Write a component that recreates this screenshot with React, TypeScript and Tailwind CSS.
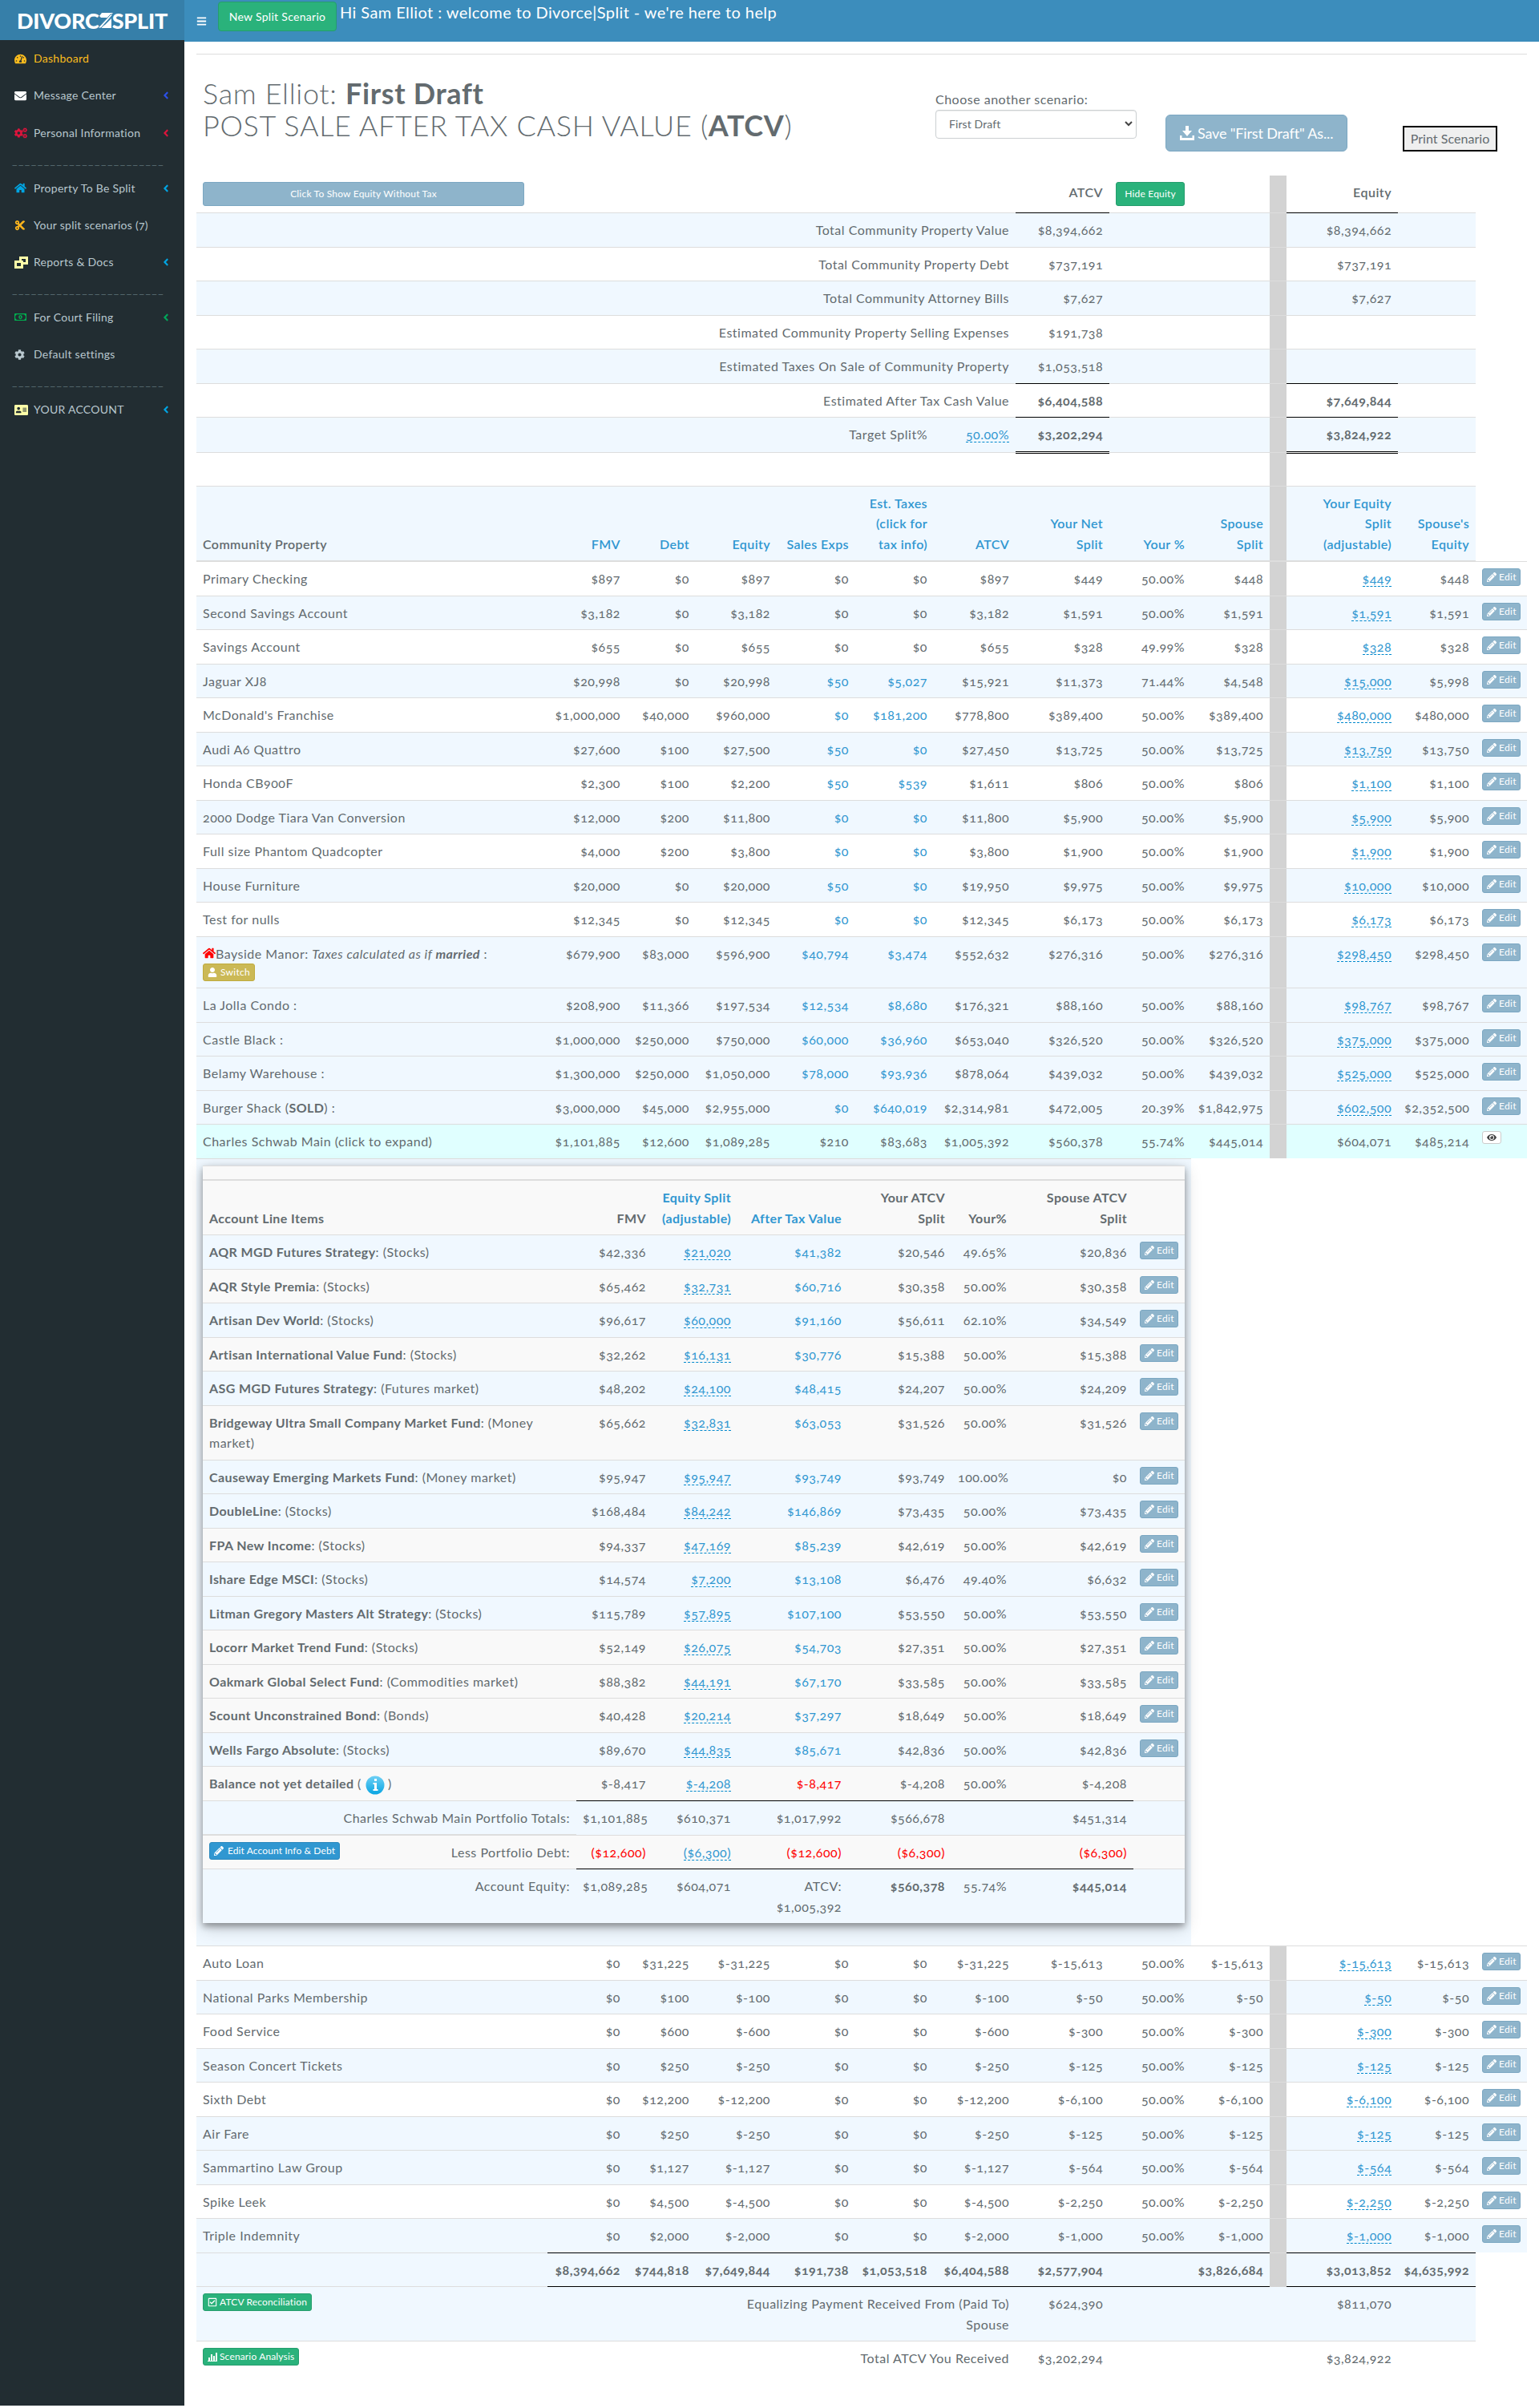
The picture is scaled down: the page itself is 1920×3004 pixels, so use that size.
import React from 'react';
import {
    FaAddressCard,
    FaAngleLeft,
    FaBars,
    FaCog,
    FaCogs,
    FaCut,
    FaEnvelope,
    FaEye,
    FaHome,
    FaPencilAlt,
    FaRegCheckSquare,
    FaRegMoneyBillAlt,
    FaTachometerAlt,
    FaUser,
} from 'react-icons/fa';

const money = (n: number) => `$${n.toLocaleString('en-US')}`;
const percent = (n: number) => `${n.toFixed(2)}%`;

/* ---------- data ---------- */

interface Property {
    name: React.ReactNode;
    // fmv, debt, equity, sales exps, taxes, atcv, your net, your %, spouse, your equity, spouse's equity
    values: number[];
    shade?: boolean;
    links?: boolean;
}

const properties: Property[] = [
    { name: 'Primary Checking', values: [897, 0, 897, 0, 0, 897, 449, 50, 448, 449, 448] },
    { name: 'Second Savings Account', values: [3182, 0, 3182, 0, 0, 3182, 1591, 50, 1591, 1591, 1591], shade: true },
    { name: 'Savings Account', values: [655, 0, 655, 0, 0, 655, 328, 49.99, 328, 328, 328] },
    { name: 'Jaguar XJ8', values: [20998, 0, 20998, 50, 5027, 15921, 11373, 71.44, 4548, 15000, 5998], shade: true, links: true },
    { name: "McDonald's Franchise", values: [1000000, 40000, 960000, 0, 181200, 778800, 389400, 50, 389400, 480000, 480000], links: true },
    { name: 'Audi A6 Quattro', values: [27600, 100, 27500, 50, 0, 27450, 13725, 50, 13725, 13750, 13750], shade: true, links: true },
    { name: 'Honda CB900F', values: [2300, 100, 2200, 50, 539, 1611, 806, 50, 806, 1100, 1100], links: true },
    { name: '2000 Dodge Tiara Van Conversion', values: [12000, 200, 11800, 0, 0, 11800, 5900, 50, 5900, 5900, 5900], shade: true, links: true },
    { name: 'Full size Phantom Quadcopter', values: [4000, 200, 3800, 0, 0, 3800, 1900, 50, 1900, 1900, 1900], links: true },
    { name: 'House Furniture', values: [20000, 0, 20000, 50, 0, 19950, 9975, 50, 9975, 10000, 10000], shade: true, links: true },
    { name: 'Test for nulls', values: [12345, 0, 12345, 0, 0, 12345, 6173, 50, 6173, 6173, 6173], links: true },
    {
        name: (
            <>
                <FaHome className="inline-block size-4 -mt-1 text-[#f00]" />
                Bayside Manor:{' '}
                <i>
                    Taxes calculated as if <b>married</b>
                </i>{' '}
                :
                <button className="flex items-center h-[22px] px-[5px] gap-1 rounded-[3px] border border-[#c0ab3c] bg-[#cbb956] text-xs text-white tracking-[0.3px]">
                    <FaUser className="size-3" />
                    Switch
                </button>
            </>
        ),
        values: [679900, 83000, 596900, 40794, 3474, 552632, 276316, 50, 276316, 298450, 298450],
        shade: true,
        links: true,
    },
    { name: 'La Jolla Condo :', values: [208900, 11366, 197534, 12534, 8680, 176321, 88160, 50, 88160, 98767, 98767], shade: true, links: true },
    { name: 'Castle Black :', values: [1000000, 250000, 750000, 60000, 36960, 653040, 326520, 50, 326520, 375000, 375000], shade: true, links: true },
    { name: 'Belamy Warehouse :', values: [1300000, 250000, 1050000, 78000, 93936, 878064, 439032, 50, 439032, 525000, 525000], shade: true, links: true },
    {
        name: (
            <>
                Burger Shack (<b>SOLD</b>) :
            </>
        ),
        values: [3000000, 45000, 2955000, 0, 640019, 2314981, 472005, 20.39, 1842975, 602500, 2352500],
        shade: true,
        links: true,
    },
];

const schwab = [1101885, 12600, 1089285, 210, 83683, 1005392, 560378, 55.74, 445014, 604071, 485214];

// name, kind, fmv, equity split, after tax, your atcv, your %, spouse atcv, shaded
const lineItems: [string, string, number, number, number, number, number, number, boolean][] = [
    ['AQR MGD Futures Strategy', 'Stocks', 42336, 21020, 41382, 20546, 49.65, 20836, true],
    ['AQR Style Premia', 'Stocks', 65462, 32731, 60716, 30358, 50, 30358, false],
    ['Artisan Dev World', 'Stocks', 96617, 60000, 91160, 56611, 62.1, 34549, true],
    ['Artisan International Value Fund', 'Stocks', 32262, 16131, 30776, 15388, 50, 15388, false],
    ['ASG MGD Futures Strategy', 'Futures market', 48202, 24100, 48415, 24207, 50, 24209, true],
    ['Bridgeway Ultra Small Company Market Fund', 'Money market', 65662, 32831, 63053, 31526, 50, 31526, false],
    ['Causeway Emerging Markets Fund', 'Money market', 95947, 95947, 93749, 93749, 100, 0, true],
    ['DoubleLine', 'Stocks', 168484, 84242, 146869, 73435, 50, 73435, true],
    ['FPA New Income', 'Stocks', 94337, 47169, 85239, 42619, 50, 42619, false],
    ['Ishare Edge MSCI', 'Stocks', 14574, 7200, 13108, 6476, 49.4, 6632, true],
    ['Litman Gregory Masters Alt Strategy', 'Stocks', 115789, 57895, 107100, 53550, 50, 53550, true],
    ['Locorr Market Trend Fund', 'Stocks', 52149, 26075, 54703, 27351, 50, 27351, false],
    ['Oakmark Global Select Fund', 'Commodities market', 88382, 44191, 67170, 33585, 50, 33585, false],
    ['Scount Unconstrained Bond', 'Bonds', 40428, 20214, 37297, 18649, 50, 18649, false],
    ['Wells Fargo Absolute', 'Stocks', 89670, 44835, 85671, 42836, 50, 42836, true],
];

// name, debt, half of it, shaded
const debts: [string, number, number, boolean][] = [
    ['Auto Loan', 31225, 15613, false],
    ['National Parks Membership', 100, 50, true],
    ['Food Service', 600, 300, false],
    ['Season Concert Tickets', 250, 125, true],
    ['Sixth Debt', 12200, 6100, false],
    ['Air Fare', 250, 125, true],
    ['Sammartino Law Group', 1127, 564, true],
    ['Spike Leek', 4500, 2250, false],
    ['Triple Indemnity', 2000, 1000, true],
];

const summary: [string, string, string][] = [
    ['Total Community Property Value', '$8,394,662', '$8,394,662'],
    ['Total Community Property Debt', '$737,191', '$737,191'],
    ['Total Community Attorney Bills', '$7,627', '$7,627'],
    ['Estimated Community Property Selling Expenses', '$191,738', ''],
    ['Estimated Taxes On Sale of Community Property', '$1,053,518', ''],
];

/* ---------- small pieces ---------- */

const cell = 'p-2 text-right align-top border-t border-[#ddd]';
const blackCell = 'p-2 text-right align-top border-t border-black';

const Editable: React.FC<{ children: React.ReactNode }> = ({ children }) => (
    <a className="border-b border-dashed border-[#0088cc] text-[#3097d1] leading-none">{children}</a>
);

const EditButton = () => (
    <button className="flex items-center h-[22px] w-12 pl-[5px] gap-[3px] rounded-[3px] border border-[#7ba7c2] bg-[#8eb4cb] text-xs text-white tracking-[0.3px] whitespace-nowrap">
        <FaPencilAlt className="size-3" />
        Edit
    </button>
);

const Gap = () => <td className="border-t border-[#ddd] bg-[#d3d3d3]" />;

const PropertyRow: React.FC<Property> = ({ name, values, shade, links }) => {
    const link = links ? 'text-[#3097d1]' : '';
    return (
        <tr className={shade ? 'bg-[#f0f8ff]' : ''}>
            <td className="p-2 align-top border-t border-[#ddd]">{name}</td>
            <td className={cell}>{money(values[0])}</td>
            <td className={cell}>{money(values[1])}</td>
            <td className={cell}>{money(values[2])}</td>
            <td className={`${cell} ${link}`}>{money(values[3])}</td>
            <td className={`${cell} ${link}`}>{money(values[4])}</td>
            <td className={cell}>{money(values[5])}</td>
            <td className={cell}>{money(values[6])}</td>
            <td className={cell}>{percent(values[7])}</td>
            <td className={cell}>{money(values[8])}</td>
            <Gap />
            <td className={cell}>
                <Editable>{money(values[9])}</Editable>
            </td>
            <td className={cell}>{money(values[10])}</td>
            <td className="px-2 pt-2 pb-0 align-top border-t border-[#ddd]">
                <EditButton />
            </td>
        </tr>
    );
};

/* ---------- sidebar ---------- */

const CloneIcon = () => (
    <svg viewBox="0 0 17 15" className="w-[17px] h-[15px] text-[#ffffa8]" fill="currentColor">
        <path fillRule="evenodd" d="M6 0h11v10h-6V7h3V3H9v2H6z" />
        <path fillRule="evenodd" d="M0 5h11v10H0zM3 8v4h5V8z" />
    </svg>
);

const Logo = () => (
    <div className="flex items-center justify-center h-[50px] bg-[#367fa9] text-white text-[27px] font-black leading-none">
        <span className="tracking-[-0.2px]">DIVORC</span>
        <svg viewBox="0 0 24 21" className="w-6 h-[21px] -ml-1.5 -mr-0.5" fill="currentColor">
            <path d="M6 5l3-4h14l-6 6H8zM21 8v12H5l8-4z" />
            <path d="M4 20L20 3l3 0L8 20z" stroke="#367fa9" />
        </svg>
        <span className="tracking-[-0.2px]">SPLIT</span>
    </div>
);

interface MenuItemProps {
    icon: React.ReactNode;
    label: string;
    chevron?: string;
    active?: boolean;
}

const MenuItem: React.FC<MenuItemProps> = ({ icon, label, chevron, active }) => (
    <li className={`flex items-center h-[46.3px] pl-[18px] pr-[19px] ${active ? 'text-[#fbbc1d]' : 'text-[#b8c7ce]'}`}>
        <span className="w-6 shrink-0">{icon}</span>
        <span className="flex-1 whitespace-nowrap">{label}</span>
        {chevron && <FaAngleLeft className={`size-[14px] translate-x-[3px] ${chevron}`} />}
    </li>
);

const Divider = () => (
    <li className="h-[22.5px] pl-[15px] text-[#5a6f74] leading-[22px] tracking-[1.5px]">________________________</li>
);

const Sidebar = () => (
    <aside className="w-[230px] h-[3001px] shrink-0 bg-[#222d32] text-sm tracking-[0.27px]">
        <Logo />
        <ul>
            <MenuItem active label="Dashboard" icon={<FaTachometerAlt className="size-[15px]" />} />
            <MenuItem label="Message Center" chevron="text-[#2b50e8]" icon={<FaEnvelope className="size-[15px] text-white" />} />
            <MenuItem label="Personal Information" chevron="text-[#dc143c]" icon={<FaCogs className="size-4 text-[#dc143c]" />} />
            <Divider />
            <MenuItem label="Property To Be Split" chevron="text-[#00a5e3]" icon={<FaHome className="size-[15px] text-[#00a5e3]" />} />
            <MenuItem label="Your split scenarios (7)" icon={<FaCut className="size-[14px] text-[#fbb41d]" />} />
            <MenuItem label="Reports & Docs" chevron="text-[#00a5e3]" icon={<CloneIcon />} />
            <Divider />
            <MenuItem label="For Court Filing" chevron="text-[#00a65a]" icon={<FaRegMoneyBillAlt className="size-[15px] text-[#00b050]" />} />
            <MenuItem label="Default settings" icon={<FaCog className="size-[13px]" />} />
            <Divider />
            <MenuItem label="YOUR ACCOUNT" chevron="text-[#00a5e3]" icon={<FaAddressCard className="size-[17px] text-[#ffffa8]" />} />
        </ul>
    </aside>
);

/* ---------- account panel ---------- */

const AccountPanel = () => (
    <div className="mb-5 bg-[#f9f9f9] shadow-[0_4px_8px_rgba(0,0,0,0.35),0_6px_20px_rgba(0,0,0,0.19)]">
        <table className="w-full table-fixed border-collapse">
            <colgroup>
                <col className="w-[466px]" />
                <col className="w-[95px]" />
                <col className="w-[106px]" />
                <col className="w-[138px]" />
                <col className="w-[129px]" />
                <col className="w-[77px]" />
                <col className="w-[150px]" />
                <col className="w-[64px]" />
            </colgroup>
            <tbody>
                <tr>
                    <td colSpan={8} className="h-[18px] border-t border-b-2 border-[#ddd]" />
                </tr>
                <tr className="align-bottom text-right font-semibold tracking-[0.4px]">
                    <th className="p-2 text-left">Account Line Items</th>
                    <th className="p-2">FMV</th>
                    <th className="p-2 text-[#3097d1]">
                        Equity Split
                        <br />
                        (adjustable)
                    </th>
                    <th className="p-2 text-[#3097d1]">After Tax Value</th>
                    <th className="p-2">
                        Your ATCV
                        <br />
                        Split
                    </th>
                    <th className="p-2">Your%</th>
                    <th className="p-2">
                        Spouse ATCV
                        <br />
                        Split
                    </th>
                    <th />
                </tr>
                {lineItems.map(([name, kind, fmv, split, afterTax, yours, pct, spouse, shade]) => (
                    <tr key={name} className={shade ? 'bg-[#f0f8ff]' : ''}>
                        <td className="p-2 align-top border-t border-[#ddd]">
                            <b>{name}</b>: ({kind})
                        </td>
                        <td className={cell}>{money(fmv)}</td>
                        <td className={cell}>
                            <Editable>{money(split)}</Editable>
                        </td>
                        <td className={`${cell} text-[#3097d1]`}>{money(afterTax)}</td>
                        <td className={cell}>{money(yours)}</td>
                        <td className={cell}>{percent(pct)}</td>
                        <td className={cell}>{money(spouse)}</td>
                        <td className="px-2 pt-2 pb-0 align-top border-t border-[#ddd]">
                            <EditButton />
                        </td>
                    </tr>
                ))}
                <tr>
                    <td className="p-2 align-top border-t border-[#ddd]">
                        <b>Balance not yet detailed</b> ({' '}
                        <svg viewBox="0 0 24 24" className="inline-block size-6 -my-2">
                            <defs>
                                <linearGradient id="info" x1="0" y1="0" x2="0" y2="1">
                                    <stop offset="0" stopColor="#6fd0f5" />
                                    <stop offset="1" stopColor="#0aa5e2" />
                                </linearGradient>
                            </defs>
                            <circle cx="12" cy="12" r="11.5" fill="url(#info)" />
                            <path d="M11 4h3v3h-3zM9.500 9H14v8h1.500v2h-6v-2H11v-6H9.500z" fill="#fff" />
                        </svg>{' '}
                        )
                    </td>
                    <td className={cell}>$-8,417</td>
                    <td className={cell}>
                        <Editable>$-4,208</Editable>
                    </td>
                    <td className={`${cell} text-[#f00]`}>$-8,417</td>
                    <td className={cell}>$-4,208</td>
                    <td className={cell}>50.00%</td>
                    <td className={cell}>$-4,208</td>
                    <td className={cell} />
                </tr>
                <tr className="bg-[#f0f8ff]">
                    <td className={cell}>Charles Schwab Main Portfolio Totals:</td>
                    <td className={blackCell}>$1,101,885</td>
                    <td className={blackCell}>$610,371</td>
                    <td className={blackCell}>$1,017,992</td>
                    <td className={blackCell}>$566,678</td>
                    <td className={blackCell} />
                    <td className={blackCell}>$451,314</td>
                    <td className={cell} />
                </tr>
                <tr>
                    <td className="p-2 align-top border-t-2 border-[#ddd]">
                        <div className="flex justify-between h-6">
                            <button className="flex items-center h-[22px] px-[5px] gap-[5px] rounded-[3px] border border-[#2a88bd] bg-[#3097d1] text-xs text-white tracking-[0.1px]">
                                <FaPencilAlt className="size-3" />
                                Edit Account Info &amp; Debt
                            </button>
                            <span>Less Portfolio Debt:</span>
                        </div>
                    </td>
                    <td className={`${cell} text-[#f00]`}>($12,600)</td>
                    <td className={cell}>
                        <Editable>($6,300)</Editable>
                    </td>
                    <td className={`${cell} text-[#f00]`}>($12,600)</td>
                    <td className={`${cell} text-[#f00]`}>($6,300)</td>
                    <td className={cell} />
                    <td className={`${cell} text-[#f00]`}>($6,300)</td>
                    <td className={cell} />
                </tr>
                <tr className="bg-[#f0f8ff]">
                    <td className={cell}>Account Equity:</td>
                    <td className={blackCell}>$1,089,285</td>
                    <td className={blackCell}>$604,071</td>
                    <td className={blackCell}>
                        ATCV:
                        <br />
                        $1,005,392
                    </td>
                    <td className={`${blackCell} font-bold`}>$560,378</td>
                    <td className={blackCell}>55.74%</td>
                    <td className={`${blackCell} font-bold`}>$445,014</td>
                    <td className={cell} />
                </tr>
            </tbody>
        </table>
    </div>
);

/* ---------- main table ---------- */

const ScenarioTable = () => (
    <table className="w-full table-fixed border-collapse">
        <colgroup>
            <col className="w-[438px]" />
            <col className="w-[99px]" />
            <col className="w-[86px]" />
            <col className="w-[101px]" />
            <col className="w-[98px]" />
            <col className="w-[98px]" />
            <col className="w-[102px]" />
            <col className="w-[117px]" />
            <col className="w-[102px]" />
            <col className="w-[98px]" />
            <col className="w-[21px]" />
            <col className="w-[139px]" />
            <col className="w-[97px]" />
            <col className="w-[64px]" />
        </colgroup>
        <tbody>
            <tr>
                <td colSpan={7} className="p-2">
                    <button className="block w-[401px] h-[30px] rounded-[3px] border border-[#7ba7c2] bg-[#8eb4cb] text-xs text-white tracking-[0.2px]">
                        Click To Show Equity Without Tax
                    </button>
                </td>
                <th className="p-2 text-right align-top font-semibold">ATCV</th>
                <td className="p-2">
                    <button className="block w-full h-[30px] rounded-[3px] border border-[#259d6d] bg-[#2ab27b] text-xs text-white tracking-[0.2px]">
                        Hide Equity
                    </button>
                </td>
                <td />
                <td className="bg-[#d3d3d3]" />
                <th className="p-2 text-right align-top font-semibold">Equity</th>
                <td />
            </tr>
            {summary.map(([label, atcv, equity], i) => (
                <tr key={label} className={i % 2 === 0 ? 'bg-[#f0f8ff]' : ''}>
                    <td colSpan={7} className={cell}>
                        {label}
                    </td>
                    <td className={i === 0 ? blackCell : cell}>{atcv}</td>
                    <td colSpan={2} className={cell} />
                    <Gap />
                    <td className={i === 0 ? blackCell : cell}>{equity}</td>
                    <td className={cell} />
                </tr>
            ))}
            <tr>
                <td colSpan={7} className={cell}>
                    Estimated After Tax Cash Value
                </td>
                <td className={`${blackCell} font-bold`}>$6,404,588</td>
                <td colSpan={2} className={cell} />
                <Gap />
                <td className={`${blackCell} font-bold`}>$7,649,844</td>
                <td className={cell} />
            </tr>
            <tr className="bg-[#f0f8ff]">
                <td colSpan={6} className={cell}>
                    Target Split%
                </td>
                <td className={cell}>
                    <Editable>50.00%</Editable>
                </td>
                <td className="p-2 text-right border-y border-y-black border-b-[3px] [border-bottom-style:double] font-bold">
                    $3,202,294
                </td>
                <td colSpan={2} className={cell} />
                <Gap />
                <td className="p-2 text-right border-y border-y-black border-b-[3px] [border-bottom-style:double] font-bold">
                    $3,824,922
                </td>
                <td className={cell} />
            </tr>
            <tr className="h-[42px]">
                <td colSpan={10} className={cell} />
                <Gap />
                <td colSpan={2} className={cell} />
            </tr>
            <tr className="bg-[#f0f8ff] text-[#3097d1] tracking-[0.4px]">
                {[
                    'Community Property',
                    'FMV',
                    'Debt',
                    'Equity',
                    'Sales Exps',
                    'Est. Taxes (click for tax info)',
                    'ATCV',
                    'Your Net Split',
                    'Your %',
                    'Spouse Split',
                    '',
                    'Your Equity Split (adjustable)',
                    "Spouse's Equity",
                ].map((label, i) => {
                    if (i === 10) {
                        return <th key={i} className="border-t border-b-2 border-[#ddd] bg-[#d3d3d3]" />;
                    }
                    return (
                        <th
                            key={i}
                            className={`py-2 align-bottom font-semibold border-t border-b-2 border-[#ddd] ${
                                i === 0 ? 'px-2 text-left text-[#636b6f]' : 'pr-2 text-right'
                            } ${i === 7 ? 'pl-8' : ''} ${i === 11 ? 'pl-10' : ''}`}
                        >
                            {label}
                        </th>
                    );
                })}
            </tr>
            {properties.map((p, i) => (
                <PropertyRow key={i} {...p} />
            ))}
            <tr className="bg-[#e0ffff]">
                <td className="p-2 align-top border-t border-[#ddd]">Charles Schwab Main (click to expand)</td>
                {schwab.slice(0, 9).map((v, i) => (
                    <td key={i} className={cell}>
                        {i === 7 ? percent(v) : money(v)}
                    </td>
                ))}
                <Gap />
                <td className={cell}>{money(schwab[9])}</td>
                <td className={cell}>{money(schwab[10])}</td>
                <td className="px-2 pt-2 pb-0 align-top border-t border-[#ddd]">
                    <button className="flex items-center justify-center w-6 h-4 rounded-[3px] border border-[#ccc] bg-white text-[#444]">
                        <FaEye className="size-3" />
                    </button>
                </td>
            </tr>
            <tr className="bg-[#f0f8ff]">
                <td colSpan={9} className="p-2 border-t border-[#ddd]">
                    <AccountPanel />
                </td>
            </tr>
            {debts.map(([name, debt, half, shade]) => (
                <PropertyRow
                    key={name}
                    name={name}
                    shade={shade}
                    values={[0, debt, -debt, 0, 0, -debt, -half, 50, -half, -half, -half]}
                />
            ))}
            <tr className="bg-[#f0f8ff] font-bold">
                <td className={cell} />
                {[
                    '$8,394,662',
                    '$744,818',
                    '$7,649,844',
                    '$191,738',
                    '$1,053,518',
                    '$6,404,588',
                    '$2,577,904',
                    '',
                    '$3,826,684',
                ].map((v, i) => (
                    <td key={i} className="py-2 pr-2 text-right border-y border-black">
                        {v}
                    </td>
                ))}
                <Gap />
                <td className="py-2 pr-2 text-right border-y border-black">$3,013,852</td>
                <td className="py-2 pr-2 text-right border-y border-black">$4,635,992</td>
            </tr>
            <tr className="bg-[#f0f8ff]">
                <td colSpan={3} className="p-2 align-top border-t border-[#ddd]">
                    <button className="flex items-center h-[22px] px-[5px] gap-[3px] rounded-[3px] border border-[#259d6d] bg-[#2ab27b] text-xs text-white tracking-[0.15px]">
                        <FaRegCheckSquare className="size-3" />
                        ATCV Reconciliation
                    </button>
                </td>
                <td colSpan={4} className={cell}>
                    Equalizing Payment Received From (Paid To)
                    <br />
                    Spouse
                </td>
                <td className={cell}>$624,390</td>
                <td colSpan={3} />
                <td className={cell}>$811,070</td>
                <td />
            </tr>
            <tr>
                <td colSpan={3} className="p-2 align-top border-t border-[#ddd]">
                    <button className="flex items-center h-[22px] px-[5px] gap-[3px] rounded-[3px] border border-[#259d6d] bg-[#2ab27b] text-xs text-white tracking-[0.15px]">
                        <svg viewBox="0 0 12 12" className="size-3" fill="currentColor">
                            <path d="M1 7h2v4H1zM4 3h2v8H4zM7 5h2v6H7zM10 1h2v10h-2zM0 11h12v1H0z" />
                        </svg>
                        Scenario Analysis
                    </button>
                </td>
                <td colSpan={4} className={cell}>
                    Total ATCV You Received
                </td>
                <td className={cell}>$3,202,294</td>
                <td colSpan={3} className={cell} />
                <td className={cell}>$3,824,922</td>
                <td className={cell} />
            </tr>
        </tbody>
    </table>
);

/* ---------- page ---------- */

const TopBar = () => (
    <header className="flex items-start h-[52px] pl-[15px] bg-[#3c8dbc] text-white">
        <FaBars className="size-[13px] mt-5" />
        <button className="w-[148px] h-[37px] mt-[2px] ml-[14px] rounded-[4px] border border-[#259d6d] bg-[#2ab27b] text-sm tracking-[0.3px]">
            New Split Scenario
        </button>
        <span className="ml-1 text-xl leading-[31px] tracking-[0.41px]">
            Hi Sam Elliot : welcome to Divorce|Split - we're here to help
        </span>
    </header>
);

const PageHeading = () => (
    <div className="flex items-start h-[152px] pl-2 border-t border-[#ddd]">
        <h1 className="w-[914px] pt-[29px] text-4xl leading-[39.6px] tracking-[0.65px] font-light">
            Sam Elliot: <b className="font-semibold">First Draft</b>
            <br />
            POST SALE AFTER TAX CASH VALUE (<b className="font-semibold">ATCV</b>)
        </h1>
        <div className="w-[251px] pt-[43px]">
            <label>Choose another scenario:</label>
            <div className="flex items-center justify-between h-9 pl-4 pr-1 rounded-[4px] border border-[#ccd0d2] bg-white text-sm tracking-[0.1px] shadow-[inset_0_1px_1px_rgba(0,0,0,0.075)]">
                First Draft
                <svg viewBox="0 0 10 7" className="w-[10px] h-[7px]" fill="none" stroke="#444" strokeWidth="2">
                    <path d="M1 1l4 4 4-4" />
                </svg>
            </div>
        </div>
        <button className="flex items-center w-[227px] h-[46px] mt-[75px] ml-9 pl-[17px] gap-1 rounded-[6px] border border-[#7ba7c2] bg-[#8eb4cb] text-lg text-white tracking-[-0.15px] whitespace-nowrap">
            <svg viewBox="0 0 18 18" className="size-[18px]" fill="currentColor">
                <path d="M7 0h4v6h4l-6 7-6-7h4z" />
                <path d="M0 12h2.500v3h13v-3H18v6H0z" />
            </svg>
            Save "First Draft" As...
        </button>
        <button className="w-[118px] h-8 mt-[89px] ml-[69px] border-2 border-black bg-[#efefef] tracking-[0.05px] whitespace-nowrap">
            Print Scenario
        </button>
    </div>
);

export default function App() {
    return (
        <div className="flex min-h-[3004px] bg-white font-[Lato,sans-serif] text-base leading-[25.5px] tracking-[0.5px] text-[#636b6f] oldstyle-nums [&_b]:font-bold [&_td_b]:tracking-[0.4px]">
            <Sidebar />
            <div className="flex-1">
                <TopBar />
                <main className="px-[15px] pt-[15px]">
                    <PageHeading />
                    <ScenarioTable />
                </main>
            </div>
        </div>
    );
}
